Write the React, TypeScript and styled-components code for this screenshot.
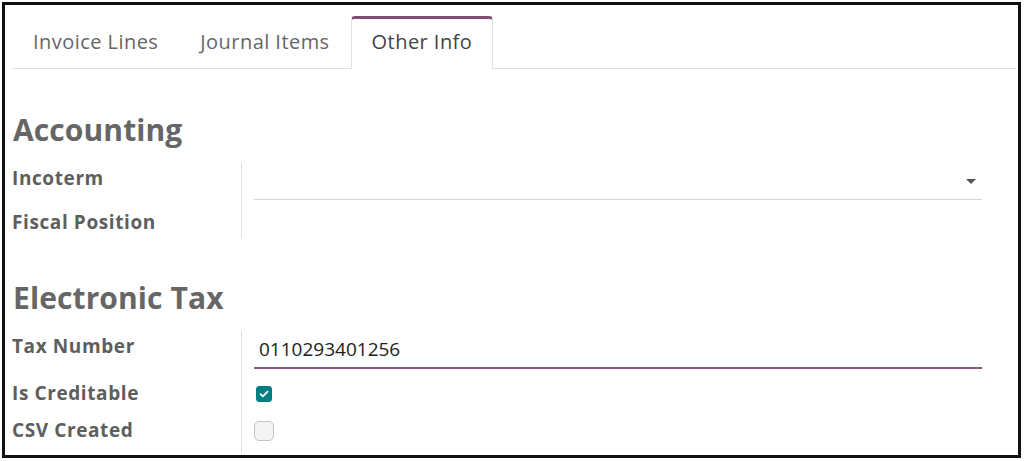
import React from "react";
import styled, { createGlobalStyle } from "styled-components";

const Global = createGlobalStyle`
  html, body { margin: 0; padding: 0; background: #ffffff; }
  body { font-family: "Open Sans", "Liberation Sans", sans-serif; }
  * { box-sizing: border-box; }
`;

const Page = styled.div`
  width: 1024px;
  height: 461px;
  padding: 2px;
  background: #ffffff;
`;

const Frame = styled.div`
  width: 1019px;
  height: 456px;
  border: 3px solid #111111;
  background: #ffffff;
  padding: 11px 2px 0 6px;
  overflow: hidden;
`;

const TabBar = styled.div`
  display: flex;
  margin-left: 1px;
  border-bottom: 1px solid #dee2e6;
`;

const Tab = styled.div<{ $active?: boolean }>`
  padding: 0 20px 4px;
  margin-bottom: -1px;
  line-height: 46px;
  font-size: 20px;
  letter-spacing: 0.45px;
  color: ${(p) => (p.$active ? "#444444" : "#666666")};
  border-top: 3px solid ${(p) => (p.$active ? "#7c5270" : "transparent")};
  border-left: 1px solid ${(p) => (p.$active ? "#dee2e6" : "transparent")};
  border-right: 1px solid ${(p) => (p.$active ? "#dee2e6" : "transparent")};
  border-radius: 4px 4px 0 0;
  background: ${(p) => (p.$active ? "#ffffff" : "transparent")};
`;

const Heading = styled.h2<{ $top: number }>`
  margin: ${(p) => p.$top}px 0 15px;
  padding-left: 2px;
  font-size: 30px;
  line-height: 36px;
  font-weight: 700;
  letter-spacing: 0.1px;
  color: #666666;
`;

const Group = styled.div`
  display: grid;
  grid-template-columns: 231px 1fr;
`;

const LabelCell = styled.div<{ $h: number }>`
  height: ${(p) => p.$h}px;
  border-right: 1px solid #dee2e6;
  font-size: 19px;
  line-height: 30px;
  font-weight: 700;
  letter-spacing: 0.6px;
  color: #5e5e5e;
  padding-left: 1px;
`;

const ValueCell = styled.div`
  padding: 0 34px 0 12px;
`;

const SelectBox = styled.div`
  height: 37px;
  border-bottom: 1px solid #d6d6d6;
  display: flex;
  align-items: center;
  justify-content: flex-end;
  padding-right: 6px;
`;

const Caret = styled.span`
  width: 0;
  height: 0;
  border-left: 5px solid transparent;
  border-right: 5px solid transparent;
  border-top: 5px solid #555555;
`;

const TextInput = styled.div`
  height: 38px;
  border-bottom: 2px solid #875a7b;
  font-size: 19px;
  line-height: 36px;
  color: #222222;
  padding-left: 5px;
`;

const Check = styled.div<{ $checked?: boolean; $top: number }>`
  margin-top: ${(p) => p.$top}px;
  margin-left: ${(p) => (p.$checked ? 2 : 0)}px;
  width: ${(p) => (p.$checked ? 16 : 20)}px;
  height: ${(p) => (p.$checked ? 16 : 20)}px;
  border-radius: ${(p) => (p.$checked ? 3 : 5)}px;
  background: ${(p) => (p.$checked ? "#017e84" : "#f4f4f4")};
  border: 1px solid ${(p) => (p.$checked ? "#017e84" : "#c4c4c4")};
  display: flex;
  align-items: center;
  justify-content: center;
`;

export default function App() {
  return (
    <>
      <Global />
      <Page>
        <Frame>
          <TabBar>
            <Tab>Invoice Lines</Tab>
            <Tab>Journal Items</Tab>
            <Tab $active>Other Info</Tab>
          </TabBar>

          <Heading $top={43}>Accounting</Heading>
          <Group>
            <LabelCell $h={44}>Incoterm</LabelCell>
            <ValueCell>
              <SelectBox>
                <Caret />
              </SelectBox>
            </ValueCell>
            <LabelCell $h={31}>Fiscal Position</LabelCell>
            <ValueCell />
          </Group>

          <Heading $top={42}>Electronic Tax</Heading>
          <Group>
            <LabelCell $h={47}>Tax Number</LabelCell>
            <ValueCell>
              <TextInput>0110293401256</TextInput>
            </ValueCell>
            <LabelCell $h={37}>Is Creditable</LabelCell>
            <ValueCell>
              <Check $checked $top={8}>
                <svg width="10" height="8" viewBox="0 0 10 8">
                  <path d="M1.5 4.2 L3.9 6.4 L8.5 1.6" fill="none" stroke="#ffffff" strokeWidth="1.8" strokeLinecap="round" strokeLinejoin="round" />
                </svg>
              </Check>
            </ValueCell>
            <LabelCell $h={38}>CSV Created</LabelCell>
            <ValueCell>
              <Check $top={6} />
            </ValueCell>
          </Group>
        </Frame>
      </Page>
    </>
  );
}
